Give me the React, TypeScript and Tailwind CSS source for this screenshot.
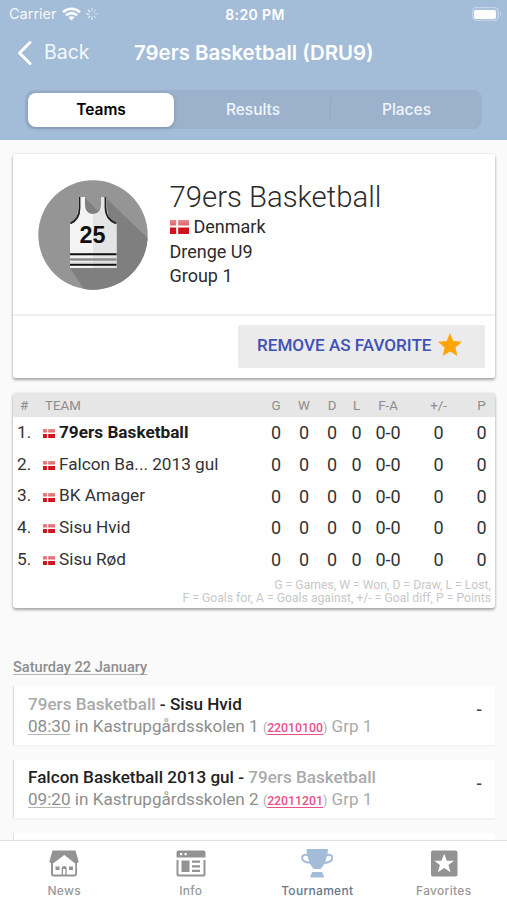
import type { ReactNode } from "react";

const teams = [
  "79ers Basketball",
  "Falcon Ba... 2013 gul",
  "BK Amager",
  "Sisu Hvid",
  "Sisu Rød",
];

const columns = "grid grid-cols-[30px_219px_28px_28px_28px_21px_42px_59px_27px]";

function Flag({ className }: { className: string }) {
  return (
    <svg viewBox="0 0 19 14" preserveAspectRatio="none" className={className}>
      <defs>
        <linearGradient id="flag" x1="0" y1="0" x2="0" y2="1">
          <stop offset="0" stopColor="#e58a8c" />
          <stop offset="0.42" stopColor="#e06266" />
          <stop offset="0.5" stopColor="#d0141e" />
          <stop offset="1" stopColor="#d0141e" />
        </linearGradient>
      </defs>
      <rect width="19" height="14" fill="url(#flag)" />
      <path d="M7.2 0v14M0 6.6h19" stroke="#fff" strokeWidth="2" />
    </svg>
  );
}

function Jersey() {
  return (
    <svg viewBox="0 0 110 110" className="h-[110px] w-[110px] shrink-0">
      <clipPath id="disc">
        <circle cx="55" cy="55" r="54.7" />
      </clipPath>
      <g clipPath="url(#disc)">
        <rect width="110" height="110" fill="#959595" />
        <path d="M67 17 125 73v50H55L32 88Z" fill="#7f7f7f" />
        <path d="M46 17 72 43H46Z" fill="#7f7f7f" />
      </g>
      <path
        d="M40 17h7v8c0 12 16 12 16 0v-8h6v11c0 9 4 14 9.5 16v44H32V44c5-2 8-7 8-16Z"
        fill="#f4f4f4"
      />
      <path d="M55 34c5 0 8-3 8-9v-8h6v11c0 9 4 14 9.5 16v44H55Z" fill="#e4e4e4" />
      <path
        d="M41.5 17v11c0 8-3.5 13-9 15.5M67.5 17v11c0 8 4.5 13 10.5 15.5"
        fill="none"
        stroke="#1c1c1c"
        strokeWidth="1.8"
      />
      <path d="M32 74.2h46.5M32 84.8h46.5" stroke="#111" strokeWidth="2" />
      <path d="M32 79.5h46.5" stroke="#8b8b8b" strokeWidth="2.4" />
      <path d="M32 82.4h46.5" stroke="#d8d8d8" strokeWidth="1" />
      <text
        x="54.5"
        y="62.5"
        textAnchor="middle"
        textLength="26"
        lengthAdjust="spacingAndGlyphs"
        fill="#111"
        className="font-['Liberation_Sans'] text-[23px] font-bold"
      >
        25
      </text>
    </svg>
  );
}

function StatusBar() {
  return (
    <div className="flex h-7 items-center pl-[9px] pr-[6px] text-white">
      <div className="flex flex-1 items-center">
        <span className="text-[14.5px] opacity-90">Carrier</span>
        <svg viewBox="0 0 19 14" className="ml-[5px] h-[14px] w-[19px]" fill="none" stroke="#fff">
          <path d="M1 5.2c4.8-4.7 12.2-4.7 17 0" strokeWidth="2.6" />
          <path d="M4 8.4c3.2-3 7.8-3 11 0" strokeWidth="2.6" />
          <path d="M9.5 13.5 6.4 10.3c1.8-1.5 4.4-1.5 6.2 0Z" fill="#fff" stroke="none" />
        </svg>
        <svg viewBox="0 0 12 12" className="ml-[5px] h-3 w-3" stroke="#fff" strokeWidth="1.2">
          <path d="M6 0v3.4" opacity=".5" />
          <path d="M6 8.6V12" opacity=".7" />
          <path d="M0 6h3.4" opacity=".75" />
          <path d="M8.6 6H12" opacity=".4" />
          <path d="m1.8 1.8 2.4 2.4" opacity=".9" />
          <path d="m7.8 7.8 2.4 2.4" opacity=".5" />
          <path d="m1.8 10.2 2.4-2.4" opacity=".7" />
          <path d="m7.8 4.2 2.4-2.4" opacity=".4" />
        </svg>
      </div>
      <span className="text-[14px] font-semibold tracking-[0.4px]">8:20 PM</span>
      <div className="flex flex-1 items-center justify-end">
        <div className="h-[14px] w-[27px] rounded-[4.5px] border border-white/30 bg-white/10 p-[1.5px]">
          <div className="h-full rounded-[2px] bg-white" />
        </div>
        <div className="ml-px h-1 w-[1.5px] rounded-r bg-white/40" />
      </div>
    </div>
  );
}

function Header() {
  return (
    <header className="h-[140px] shrink-0 bg-[#a3bcd8] font-[Inter,sans-serif] text-white">
      <StatusBar />
      <div className="flex h-[50px] items-center pl-[17px]">
        <svg viewBox="0 0 15 24" className="h-6 w-[15px]" fill="none" stroke="#fff" strokeWidth="3">
          <path d="M13 1.5 2.5 12 13 22.5" strokeLinecap="round" strokeLinejoin="round" />
        </svg>
        <span className="ml-[12px] w-[90px] text-[19.5px] opacity-90">Back</span>
        <h1 className="whitespace-nowrap text-[20.4px] font-semibold">79ers Basketball (DRU9)</h1>
      </div>
      <div className="ml-[25px] mt-[12px] flex h-[39px] w-[457px] items-center rounded-[9px] bg-[#9bb1cc] pl-[3px] text-[15.5px] font-medium">
        <div className="flex h-[34px] w-[146px] items-center justify-center rounded-[8px] bg-white font-semibold text-black shadow-[0_1px_4px_rgba(0,0,0,0.2)]">
          Teams
        </div>
        <div className="ml-[2px] w-[155px] border-r border-[#92a8c3] text-center text-[#f0f6fd]">Results</div>
        <div className="w-[151px] text-center text-[#f0f6fd]">Places</div>
      </div>
    </header>
  );
}

function TeamCard() {
  return (
    <section className="h-[224px] rounded-[2px] bg-white shadow-[0_2px_3px_rgba(0,0,0,0.32),0_0_3px_rgba(0,0,0,0.1)]">
      <div className="flex h-[162px] border-b-2 border-[#efefef] pl-[24.5px] pt-[25.5px]">
        <Jersey />
        <div className="ml-[22px] pt-[0.5px] text-[18px] leading-[24.5px] text-[#2b2b2b]">
          <h2 className="h-[35px] text-[29.3px] font-light leading-[35px]">79ers Basketball</h2>
          <div className="flex items-center">
            <Flag className="mr-[5px] h-[14px] w-[19px]" />
            Denmark
          </div>
          <div>Drenge U9</div>
          <div>Group 1</div>
        </div>
      </div>
      <div className="flex justify-end pr-[10px] pt-[9px]">
        <button className="flex h-[43px] w-[247px] items-center rounded-[2px] bg-[#ebebeb] pb-px pl-[19px] text-[17.1px] font-medium text-[#3f51b5]">
          REMOVE AS FAVORITE
          <svg viewBox="2 2 20 19" className="mb-[3px] ml-[6px] h-[23px] w-[24px]" fill="#ffa50a">
            <path d="M12 17.27 18.18 21l-1.64-7.03L22 9.24l-7.19-.61L12 2 9.19 8.63 2 9.24l5.46 4.73L5.82 21z" />
          </svg>
        </button>
      </div>
    </section>
  );
}

function Standings() {
  return (
    <section className="mt-[15px] h-[215px] rounded-[3px] bg-white text-[18px] text-[#333] shadow-[0_2px_3px_rgba(0,0,0,0.32),0_0_3px_rgba(0,0,0,0.1)]">
      <div className={`${columns} h-[24px] items-center rounded-t-[3px] bg-[#e6e6e6] pt-px text-center text-[13.3px] text-[#8c8c8c]`}>
        <span className="pr-[8px]">#</span>
        <span className="pl-[2px] text-left">TEAM</span>
        <span>G</span>
        <span>W</span>
        <span>D</span>
        <span>L</span>
        <span>F-A</span>
        <span>+/-</span>
        <span>P</span>
      </div>
      {teams.map((team, i) => (
        <div key={team} className={`${columns} h-[31.7px] items-center text-center`}>
          <span className="pl-[4px] text-left text-[17.3px]">{i + 1}.</span>
          <span className="flex items-center text-[17.2px]">
            <Flag className="mr-[4px] mt-[2px] h-[9px] w-[12px]" />
            <span className={i === 0 ? "font-bold text-[#1c1c1c]" : ""}>{team}</span>
          </span>
          <span>0</span>
          <span>0</span>
          <span>0</span>
          <span>0</span>
          <span>0-0</span>
          <span>0</span>
          <span>0</span>
        </div>
      ))}
      <p className="pr-[4px] pt-[4px] text-right text-[12.2px] leading-[12.5px] text-[#c8c8c8]">
        G = Games, W = Won, D = Draw, L = Lost,
        <br />
        F = Goals for, A = Goals against, +/- = Goal diff, P = Points
      </p>
    </section>
  );
}

type MatchProps = {
  title: ReactNode;
  time: string;
  place: string;
  id: string;
};

function Match({ title, time, place, id }: MatchProps) {
  return (
    <div className="mb-[15px] flex h-[58.5px] shrink-0 justify-between border-l-[1.5px] border-[#dcdcdc] bg-white pl-[14px] pr-[13px] pt-[6.5px] shadow-[0_1px_2px_rgba(0,0,0,0.06)]">
      <div className="leading-[22px]">
        <div className="text-[17.1px] font-medium text-[#222]">{title}</div>
        <div className="text-[17.1px] text-[#8e8e8e]">
          <span className="underline decoration-[#b5b5b5] decoration-1 underline-offset-[2px]">{time}</span> in {place}{" "}
          <span className="text-[12.3px] text-[#aaa]">
            (<span className="font-medium text-[#ea5089] underline decoration-1 underline-offset-[2px]">{id}</span>)
          </span>{" "}
          <span className="text-[#aaa]">Grp 1</span>
        </div>
      </div>
      <span className="pt-[5.5px] text-[17px] font-medium leading-[22px] text-[#444]">-</span>
    </div>
  );
}

function Schedule() {
  return (
    <section className="mt-[50px]">
      <h3 className="mb-[10px] h-[18px] text-[14.6px] font-medium leading-[18px] text-[#8e8e8e]">
        <span className="underline decoration-[#b5b5b5] decoration-1 underline-offset-[2px] [text-decoration-skip-ink:none]">
          Saturday 22 January
        </span>
      </h3>
      <Match
        title={
          <>
            <span className="text-[#aaa]">79ers Basketball</span> - Sisu Hvid
          </>
        }
        time="08:30"
        place="Kastrupgårdsskolen 1"
        id="22010100"
      />
      <Match
        title={
          <>
            Falcon Basketball 2013 gul - <span className="text-[#aaa]">79ers Basketball</span>
          </>
        }
        time="09:20"
        place="Kastrupgårdsskolen 2"
        id="22011201"
      />
      <div className="h-[58px] border-l-[1.5px] border-[#dcdcdc] bg-white" />
    </section>
  );
}

function Tab({ label, active, children }: { label: string; active?: boolean; children: ReactNode }) {
  return (
    <div className={`flex flex-1 flex-col items-center ${active ? "text-[#a3bcd8]" : "text-[#939393]"}`}>
      <svg viewBox="0 0 32 30" className="mt-[8px] h-[30px] w-8" fill="currentColor">
        {children}
      </svg>
      <span className={`mt-[4px] text-[12px] font-medium leading-[16px] tracking-[0.3px] ${active ? "text-[#66788c]" : "text-[#999]"}`}>
        {label}
      </span>
    </div>
  );
}

function TabBar() {
  return (
    <nav className="flex h-[60px] shrink-0 border-t border-[#dedede] bg-white pl-px font-[Inter,sans-serif]">
      <Tab label="News">
        <path
          fillRule="evenodd"
          d="M4.5 1.5h23l3 10.5c0 1.5-.5 2-1.5 2v11c0 1.5-1 2.5-2.5 2.5h-21C4 27.5 3 26.5 3 25V14c-1 0-1.5-.5-1.5-2ZM5 14.5v10.2c0 .6.3.9.9.9h20.4c.6 0 .9-.3.9-.9V14.5L16.3 6Z"
        />
        <path d="M7.5 17.5h4V21h-4zM21 17.5h4V21h-4zM13.7 19c0-2.800 5-2.800 5 0v7h-1.300v-6h-2.400v6h-1.300z" />
      </Tab>
      <Tab label="Info">
        <path
          fillRule="evenodd"
          d="M4 1.5h24.5c1.2 0 2 .8 2 2V8.500h-29V3.500c0-1.200.8-2 2-2ZM5 4v2.200h2.200V4Zm4.500 0v2.200h2.200V4Z"
        />
        <path d="M1.5 11h2v14.500h25V11h2v14.500c0 1.300-.9 2-2 2h-25c-1.200 0-2-.8-2-2Z" />
        <path d="M6.5 11.500h8V23h-8zM17 11.500h8v2.200h-8zM17 16.200h8v2.200h-8zM17 20.800h8V23h-8z" />
      </Tab>
      <Tab label="Tournament" active>
        <path d="M5.5 0h21.5c0 2.500-.5 5-1.200 7.500-1.300 5.500-3.300 10-6.300 12.500h-6.500C10 17.500 8 13 6.700 7.500 6 5 5.500 2.500 5.500 0ZM11.500 23h9.500c.8 1.500 1.800 3 2 5.500H9.300c.2-2.500 1.200-4 2.200-5.500Z" />
        <path
          d="M7 6.200c-4-1.200-6.300.3-5.800 3.300.6 3 4 4.300 8.800 4.300M25.500 6.200c4-1.200 6.300.3 5.800 3.300-.6 3-4 4.300-8.800 4.300"
          fill="none"
          stroke="currentColor"
          strokeWidth="2"
        />
      </Tab>
      <Tab label="Favorites">
        <path
          fillRule="evenodd"
          d="M5 1.500h22.500c1.200 0 2 .8 2 2v22c0 1.200-.8 2-2 2H5c-1.200 0-2-.8-2-2v-22c0-1.200.8-2 2-2ZM16.200 4.700l-2.700 7H6.300l5.600 4.400-2 7.200 6.300-4.200 6.300 4.200-2-7.200 5.600-4.400h-7.200Z"
        />
      </Tab>
    </nav>
  );
}

export default function App() {
  return (
    <div className="flex h-[900px] w-[507px] flex-col overflow-hidden bg-[#fafafa] font-[Roboto,sans-serif]">
      <Header />
      <main className="min-h-0 flex-1 overflow-hidden pl-[13px] pr-[12px] pt-[14px]">
        <TeamCard />
        <Standings />
        <Schedule />
      </main>
      <TabBar />
    </div>
  );
}
